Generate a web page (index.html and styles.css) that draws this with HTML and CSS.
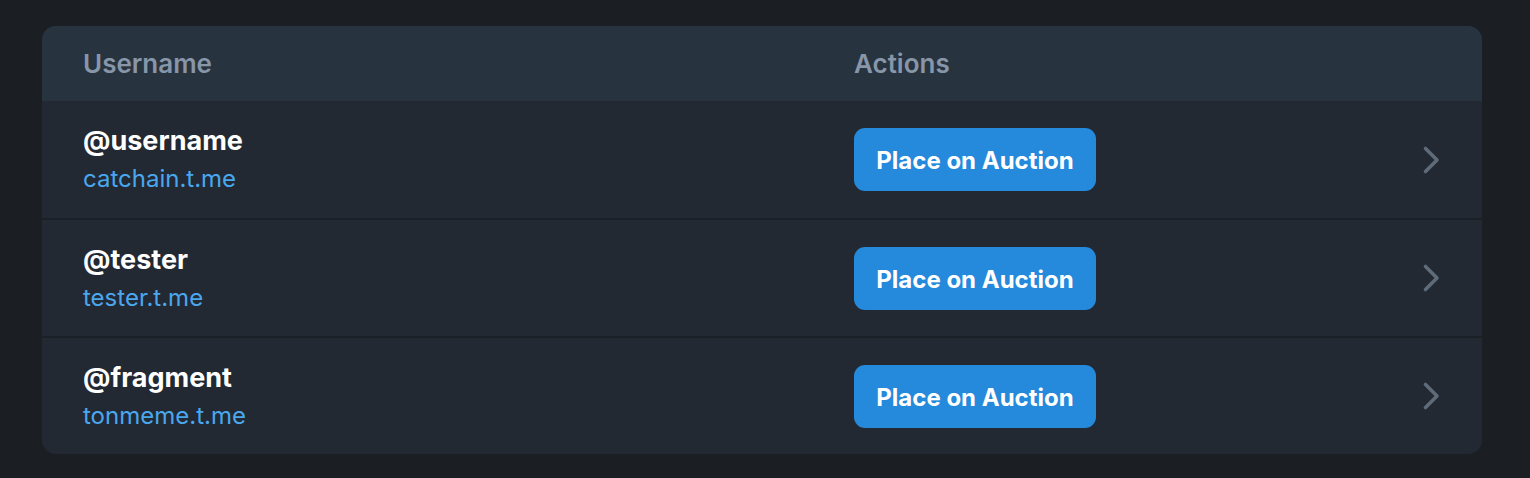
FILE: index.html
```html
<!DOCTYPE html>
<html>
<head>
<meta charset="utf-8">
<link rel="stylesheet" href="styles.css">
</head>
<body>
<div class="card">
  <div class="row head">
    <div class="th">Username</div>
    <div class="th">Actions</div>
    <div></div>
  </div>
  <div class="row item">
    <div class="user">
      <div class="name">@username</div>
      <a class="link">catchain.t.me</a>
    </div>
    <div><button class="btn">Place on Auction</button></div>
    <svg class="chev" width="24" height="30" viewBox="0 0 24 30"><path d="M6.5 3.5L18 15L6.5 26.5" fill="none" stroke="#5f6b79" stroke-width="3.6" stroke-linecap="round" stroke-linejoin="round"/></svg>
  </div>
  <div class="row item">
    <div class="user">
      <div class="name">@tester</div>
      <a class="link">tester.t.me</a>
    </div>
    <div><button class="btn">Place on Auction</button></div>
    <svg class="chev" width="24" height="30" viewBox="0 0 24 30"><path d="M6.5 3.5L18 15L6.5 26.5" fill="none" stroke="#5f6b79" stroke-width="3.6" stroke-linecap="round" stroke-linejoin="round"/></svg>
  </div>
  <div class="row item">
    <div class="user">
      <div class="name">@fragment</div>
      <a class="link">tonmeme.t.me</a>
    </div>
    <div><button class="btn">Place on Auction</button></div>
    <svg class="chev" width="24" height="30" viewBox="0 0 24 30"><path d="M6.5 3.5L18 15L6.5 26.5" fill="none" stroke="#5f6b79" stroke-width="3.6" stroke-linecap="round" stroke-linejoin="round"/></svg>
  </div>
</div>
</body>
</html>
```

FILE: styles.css
```css
html, body {
  margin: 0;
  background: #1b1f24;
  font-family: "Inter", "Noto Sans", sans-serif;
}
body {
  padding: 26px 48px 25px 42px;
}
.card {
  background: #222933;
  border-radius: 14px;
  overflow: hidden;
}
.row {
  display: grid;
  grid-template-columns: 771px 1fr 24px;
  align-items: center;
  padding: 0 39px 0 41px;
}
.head {
  background: #283340;
  height: 75px;
}
.th {
  color: #8796a8;
  font-size: 26px;
  font-weight: 600;
}
.item {
  height: 116px;
  border-top: 2px solid #1b2027;
}
.head + .item {
  border-top: none;
  height: 117px;
}
.user {
  display: flex;
  flex-direction: column;
  gap: 7px;
}
.name {
  color: #ffffff;
  font-size: 27px;
  line-height: 32px;
  font-weight: 700;
}
.link {
  color: #4aa7ee;
  font-size: 24px;
  line-height: 30px;
}
.btn {
  background: #2589dc;
  color: #fff;
  border: none;
  border-radius: 11px;
  width: 242px;
  height: 63px;
  font-family: inherit;
  font-size: 24px;
  font-weight: 700;
  padding: 2px 0 0;
}
.chev {
  display: block;
}
```
